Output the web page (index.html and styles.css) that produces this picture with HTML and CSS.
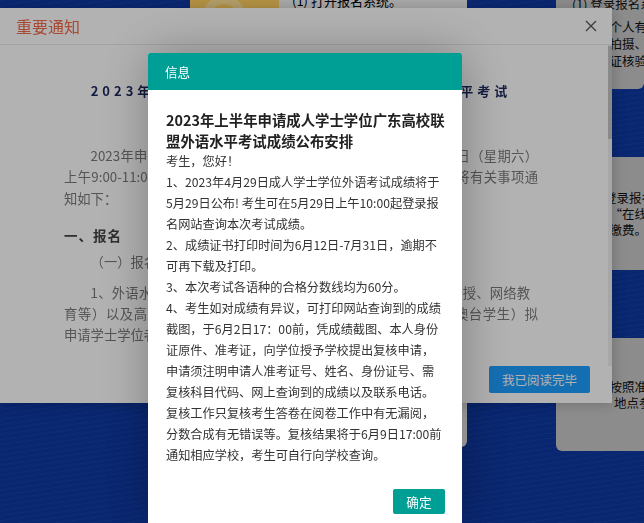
FILE: index.html
```html
<!DOCTYPE html>
<html lang="zh-CN">
<head>
<meta charset="utf-8">
<title>重要通知</title>
<link rel="stylesheet" href="styles.css">
</head>
<body>
<div class="page">
  <div class="gap-col"></div>
  <div class="badge"><span class="badge-ring"></span></div>
  <div class="step-card">
    <p class="step-line">(1) 打开报名系统。</p>
  </div>
  <div class="gap-col"></div>
  <div class="side">
    <div class="side-card side-a">
      <p class="side-first">(1) 登录报名系统，注册</p>
      <p>并填写个人有关信息</p>
      <p>须近期拍摄、照片</p>
      <p>经身份证核验，</p>
    </div>
    <div class="side-card side-b">
      <p>（2）登录报名系统</p>
      <p>请考生“在线支付</p>
      <p>并线上缴费。</p>
    </div>
    <div class="side-card side-c">
      <p>请考生按照准考证</p>
      <p class="side-inset">地点参加考试</p>
    </div>
  </div>
</div>

<div class="layer notice">
  <div class="notice-head">
    <h2 class="notice-title">重要通知</h2>
    <button class="close" type="button" aria-label="关闭">
      <svg width="12" height="12" viewBox="0 0 12 12"><path d="M1 1L11 11M11 1L1 11" stroke="#555" stroke-width="1.3" fill="none"/></svg>
    </button>
  </div>
  <div class="notice-body">
    <h3 class="notice-heading">2023年上半年成人学士学位广东高校联盟外语水平考试</h3>
    <p class="notice-para">
      <span class="jl indent">2023年申请成人学士学位广东高校联盟外语水平考试于4月15日（星期六）</span>
      <span class="jl">上午9:00-11:00在广东省内各考点举行。为做好考试报名工作，现将有关事项通</span>
      <span class="ll">知如下：</span>
    </p>
    <h4 class="notice-section">一、报名</h4>
    <p class="notice-sub">（一）报名对象</p>
    <p class="notice-para para-two">
      <span class="jl indent short">1、外语水平考试报考对象：在粤高校成人高等教育（业余、函授、网络教</span>
      <span class="jl">育等）以及高等教育自学考试的本科毕业生或应届毕业生（含港澳台学生）拟</span>
      <span class="ll">申请学士学位者，均可报名参加考试。</span>
    </p>
    <span class="scroll-track"><span class="scroll-thumb"></span></span>
  </div>
  <div class="notice-foot">
    <button class="btn-read" type="button">我已阅读完毕</button>
  </div>
</div>

<div class="shade"></div>

<div class="layer info">
  <div class="info-head">信息</div>
  <div class="info-body">
    <h3 class="info-title">2023年上半年申请成人学士学位广东高校联<br>盟外语水平考试成绩公布安排</h3>
    <p>考生，您好！</p>
    <p>1、2023年4月29日成人学士学位外语考试成绩将于<br>5月29日公布! 考生可在5月29日上午10:00起登录报<br>名网站查询本次考试成绩。</p>
    <p>2、成绩证书打印时间为6月12日-7月31日，逾期不<br>可再下载及打印。</p>
    <p>3、本次考试各语种的合格分数线均为60分。</p>
    <p>4、考生如对成绩有异议，可打印网站查询到的成绩<br>截图，于6月2日17：00前，凭成绩截图、本人身份<br>证原件、准考证，向学位授予学校提出复核申请，<br>申请须注明申请人准考证号、姓名、身份证号、需<br>复核科目代码、网上查询到的成绩以及联系电话。<br>复核工作只复核考生答卷在阅卷工作中有无漏阅，<br>分数合成有无错误等。复核结果将于6月9日17:00前<br>通知相应学校，考生可自行向学校查询。</p>
  </div>
  <div class="info-foot">
    <button class="btn-ok" type="button">确定</button>
  </div>
</div>
</body>
</html>
```
FILE: styles.css
```css
* { box-sizing: border-box; }
html, body { margin: 0; height: 100%; overflow: hidden; }
body {
  font-family: "Noto Sans CJK SC", "Noto Sans", sans-serif;
  color: #000;
  background: #0d37a2;
}
p, h2, h3, h4 { margin: 0; font-weight: normal; }
button { font-family: inherit; border: 0; cursor: pointer; }

/* background page */
.page {
  display: grid;
  grid-template-columns: 190px 89px 188px 89px 88px;
  align-items: start;
  height: 523px;
  overflow: hidden;
  background-color: #0d37a2;
  background-image: repeating-linear-gradient(172deg, rgba(255,255,255,.035) 0 1px, transparent 1px 5px);
}
.badge {
  position: relative;
  height: 30px;
  background: #ffd060;
  overflow: hidden;
}
.badge-ring {
  position: absolute;
  left: 12px;
  top: -4px;
  width: 44px;
  height: 44px;
  border-radius: 50%;
  border: 8px solid rgba(255,255,255,.35);
}
.step-card {
  height: 447px;
  background: #f0f0f0;
  border-radius: 0 0 6px 6px;
  padding: 0 13px;
  font-size: 13px;
  white-space: nowrap;
  overflow: hidden;
}
.step-line { margin-top: -9px; line-height: 20px; }
.side { display: flex; flex-direction: column; gap: 68px; }
.side-card {
  background: #c9c9c9;
  padding-left: 16px;
  font-size: 12.5px;
  line-height: 17px;
  white-space: nowrap;
  overflow: hidden;
  color: #111;
}
.side-a { height: 89px; border-radius: 0 0 6px 6px; }
.side-first { margin: -5.5px 0 6px; }
.side-b { height: 113px; border-radius: 6px 0 0 6px; padding-top: 33px; line-height: 16px; }
.side-c { height: 113px; border-radius: 6px 0 0 6px; padding-top: 41px; line-height: 16px; }
.side-inset { padding-left: 42px; }

/* layers */
.layer { position: fixed; background: #fff; }
.shade { position: fixed; inset: 0; background: rgba(0,0,0,.3); }

.notice {
  left: 0;
  top: 7.5px;
  width: 612px;
  height: 395.5px;
  display: flex;
  flex-direction: column;
  box-shadow: 1px 1px 12px rgba(0,0,0,.2);
}
.notice-head {
  display: flex;
  align-items: center;
  justify-content: space-between;
  height: 37px;
  padding: 0 15px 0 16px;
  border-bottom: 1px solid #e8e8e8;
}
.notice-title { font-size: 16px; color: #f26a4b; line-height: 36px; }
.close { background: none; padding: 0; width: 12px; height: 12px; display: flex; }
.notice-body {
  position: relative;
  flex: 1;
  padding: 35px 74px 0 64px;
  color: #7a7a7a;
  font-size: 13.3px;
  overflow: hidden;
}
.notice-heading {
  text-align: center;
  font-size: 13px;
  font-weight: 700;
  letter-spacing: 4px;
  line-height: 22px;
  color: #1e2a5e;
  margin-bottom: 43px;
}
.notice-para { line-height: 21.5px; }
.jl { display: block; text-align: justify; text-align-last: justify; white-space: nowrap; }
.jl.short { margin-right: 8px; }
.ll { display: block; }
.indent { padding-left: 2em; }
.notice-section {
  margin-top: 15px;
  font-size: 13.5px;
  font-weight: 700;
  letter-spacing: 1px;
  line-height: 22px;
  color: #444;
}
.notice-sub { margin-top: 5px; padding-left: 2em; line-height: 22px; }
.para-two { margin-top: 9px; line-height: 21px; }
.scroll-track {
  position: absolute;
  right: 0;
  top: 0;
  bottom: 0;
  width: 4px;
  background: #efefef;
}
.scroll-thumb {
  display: block;
  margin-top: 1px;
  height: 93px;
  background: #c4c4c4;
}
.notice-foot {
  display: flex;
  justify-content: flex-end;
  padding: 0 22px 10px;
}
.btn-read {
  height: 27px;
  padding: 0 13px;
  background: #1e9fff;
  color: #fff;
  font-size: 12.5px;
  border-radius: 2px;
}

.info {
  left: 148px;
  top: 53px;
  width: 314px;
  border-radius: 2px;
  box-shadow: 1px 1px 50px rgba(0,0,0,.3);
  overflow: hidden;
}
.info-head {
  height: 37px;
  line-height: 37px;
  padding-left: 17px;
  background: #009f95;
  color: #fff;
  font-size: 12.6px;
}
.info-body {
  padding: 19px 10px 0 18px;
  font-size: 12.2px;
  line-height: 21px;
  color: #333;
  white-space: nowrap;
}
.info-title {
  font-size: 14.4px;
  font-weight: 700;
  line-height: 21px;
  color: #222;
}
.info-foot {
  display: flex;
  justify-content: flex-end;
  padding: 22.5px 17px 12px;
}
.btn-ok {
  height: 25px;
  padding: 0 13.5px;
  background: #009f95;
  color: #fff;
  font-size: 12.6px;
  border-radius: 2px;
}
```
